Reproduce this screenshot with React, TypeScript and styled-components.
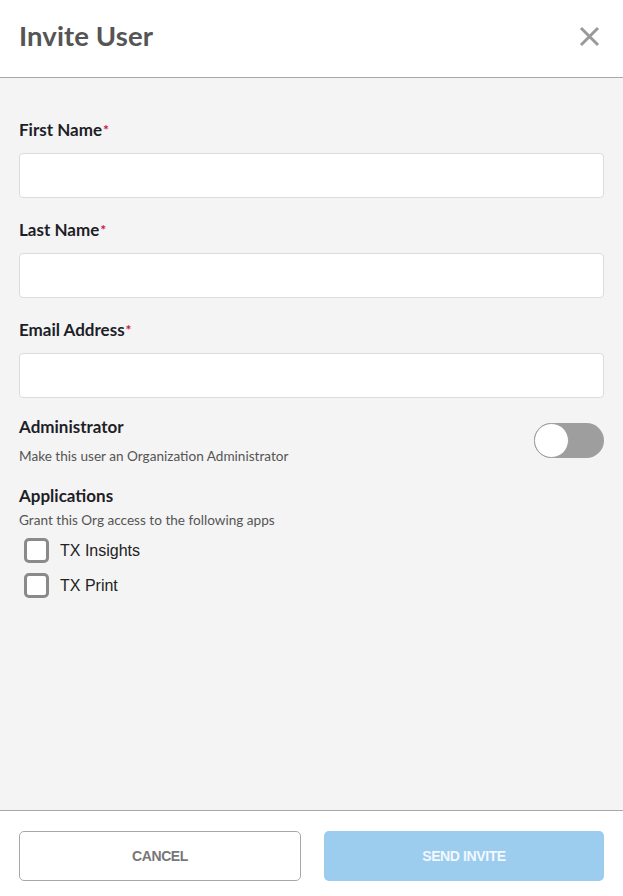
import React, { useState } from 'react';
import styled, { createGlobalStyle } from 'styled-components';

const GlobalStyle = createGlobalStyle`
  html, body {
    margin: 0;
    padding: 0;
    background: #ffffff;
  }
  body {
    font-family: Lato, "Open Sans", "Liberation Sans", sans-serif;
  }
  * {
    box-sizing: border-box;
  }
`;

const Modal = styled.div`
  display: flex;
  flex-direction: column;
  width: 623px;
  height: 896px;
  background: #fff;
`;

const Header = styled.header`
  display: flex;
  align-items: center;
  justify-content: space-between;
  height: 78px;
  padding: 0 19px 6px 19px;
  border-bottom: 1px solid #a8a8a8;
`;

const Title = styled.h1`
  margin: 0;
  font-size: 27.5px;
  font-weight: 700;
  color: #555555;
  letter-spacing: 0.1px;
`;

const CloseButton = styled.button`
  display: flex;
  align-items: center;
  justify-content: center;
  width: 28px;
  height: 28px;
  padding: 0;
  margin-right: 1px;
  margin-top: 2px;
  border: none;
  background: transparent;
  cursor: pointer;
`;

const Body = styled.main`
  flex: 1;
  display: flex;
  flex-direction: column;
  background: #f4f4f4;
  padding: 42px 19px 0 19px;
`;

const Field = styled.div`
  display: flex;
  flex-direction: column;
  gap: 13px;
  margin-bottom: 22px;
`;

const Label = styled.label`
  font-size: 17px;
  line-height: 20px;
  font-weight: 700;
  color: #1e1e28;
`;

const Required = styled.span`
  color: #c8174a;
  font-size: 14px;
  vertical-align: top;
  margin-left: 1px;
`;

const Input = styled.input`
  height: 45px;
  width: 100%;
  border: 1px solid #dcdcdc;
  border-radius: 4px;
  background: #fff;
  padding: 0 12px;
  font-size: 16px;
  outline: none;
`;

const Row = styled.div`
  display: flex;
  align-items: center;
  justify-content: space-between;
  margin-top: -3px;
`;

const Group = styled.div`
  display: flex;
  flex-direction: column;
`;

const SectionTitle = styled.div`
  font-size: 17px;
  line-height: 20px;
  font-weight: 700;
  color: #1e1e28;
`;

const Hint = styled.div<{ $gap: number }>`
  margin-top: ${p => p.$gap}px;
  font-size: 13.6px;
  line-height: 16px;
  color: #555555;
`;

const Track = styled.button<{ $on: boolean }>`
  position: relative;
  width: 70px;
  height: 35px;
  padding: 0;
  border: none;
  border-radius: 18px;
  background: ${p => (p.$on ? '#4a9fe0' : '#9e9e9e')};
  cursor: pointer;
`;

const Knob = styled.span<{ $on: boolean }>`
  position: absolute;
  top: 0;
  left: ${p => (p.$on ? '35px' : '0')};
  width: 35px;
  height: 35px;
  border-radius: 50%;
  background: #fff;
  border: 1px solid #9e9e9e;
`;

const Apps = styled.div`
  display: flex;
  flex-direction: column;
  margin-top: 22px;
`;

const CheckList = styled.div`
  display: flex;
  flex-direction: column;
  gap: 10px;
  margin-top: 10px;
  padding-left: 5px;
`;

const CheckRow = styled.label`
  display: flex;
  align-items: center;
  gap: 11px;
  cursor: pointer;
`;

const Box = styled.span<{ $checked: boolean }>`
  width: 25px;
  height: 25px;
  border: 3px solid #8a8a8a;
  border-radius: 5px;
  background: ${p => (p.$checked ? '#8a8a8a' : '#fff')};
`;

const CheckText = styled.span`
  font-family: "Liberation Sans", Arial, sans-serif;
  font-size: 16px;
  color: #222222;
`;

const Footer = styled.footer`
  display: flex;
  gap: 23px;
  padding: 20px 19px 15px 19px;
  border-top: 1px solid #a8a8a8;
  background: #fff;
`;

const Button = styled.button<{ $primary?: boolean }>`
  flex: 1;
  height: 50px;
  border-radius: 5px;
  border: ${p => (p.$primary ? 'none' : '1px solid #a8a8a8')};
  background: ${p => (p.$primary ? '#9dcdee' : '#fff')};
  color: ${p => (p.$primary ? '#f2f8fd' : '#777777')};
  font-family: "Liberation Sans", Arial, sans-serif;
  font-size: 14px;
  font-weight: 700;
  letter-spacing: -0.4px;
  cursor: pointer;
`;

const apps = ['TX Insights', 'TX Print'];

export default function App() {
  const [admin, setAdmin] = useState(false);
  const [checked, setChecked] = useState<Record<string, boolean>>({});

  return (
    <>
      <GlobalStyle />
      <Modal>
        <Header>
          <Title>Invite User</Title>
          <CloseButton aria-label="Close">
            <svg width="21" height="21" viewBox="0 0 21 21">
              <path d="M2 2 L19 19 M19 2 L2 19" stroke="#9a9a9a" strokeWidth="3" />
            </svg>
          </CloseButton>
        </Header>
        <Body>
          <Field>
            <Label>
              First Name<Required>*</Required>
            </Label>
            <Input />
          </Field>
          <Field>
            <Label>
              Last Name<Required>*</Required>
            </Label>
            <Input />
          </Field>
          <Field>
            <Label>
              Email Address<Required>*</Required>
            </Label>
            <Input />
          </Field>
          <Row>
            <Group>
              <SectionTitle>Administrator</SectionTitle>
              <Hint $gap={11}>Make this user an Organization Administrator</Hint>
            </Group>
            <Track $on={admin} onClick={() => setAdmin(!admin)}>
              <Knob $on={admin} />
            </Track>
          </Row>
          <Apps>
            <SectionTitle>Applications</SectionTitle>
            <Hint $gap={6}>Grant this Org access to the following apps</Hint>
            <CheckList>
              {apps.map(name => (
                <CheckRow
                  key={name}
                  onClick={() => setChecked({ ...checked, [name]: !checked[name] })}
                >
                  <Box $checked={Boolean(checked[name])} />
                  <CheckText>{name}</CheckText>
                </CheckRow>
              ))}
            </CheckList>
          </Apps>
        </Body>
        <Footer>
          <Button>CANCEL</Button>
          <Button $primary>SEND INVITE</Button>
        </Footer>
      </Modal>
    </>
  );
}
